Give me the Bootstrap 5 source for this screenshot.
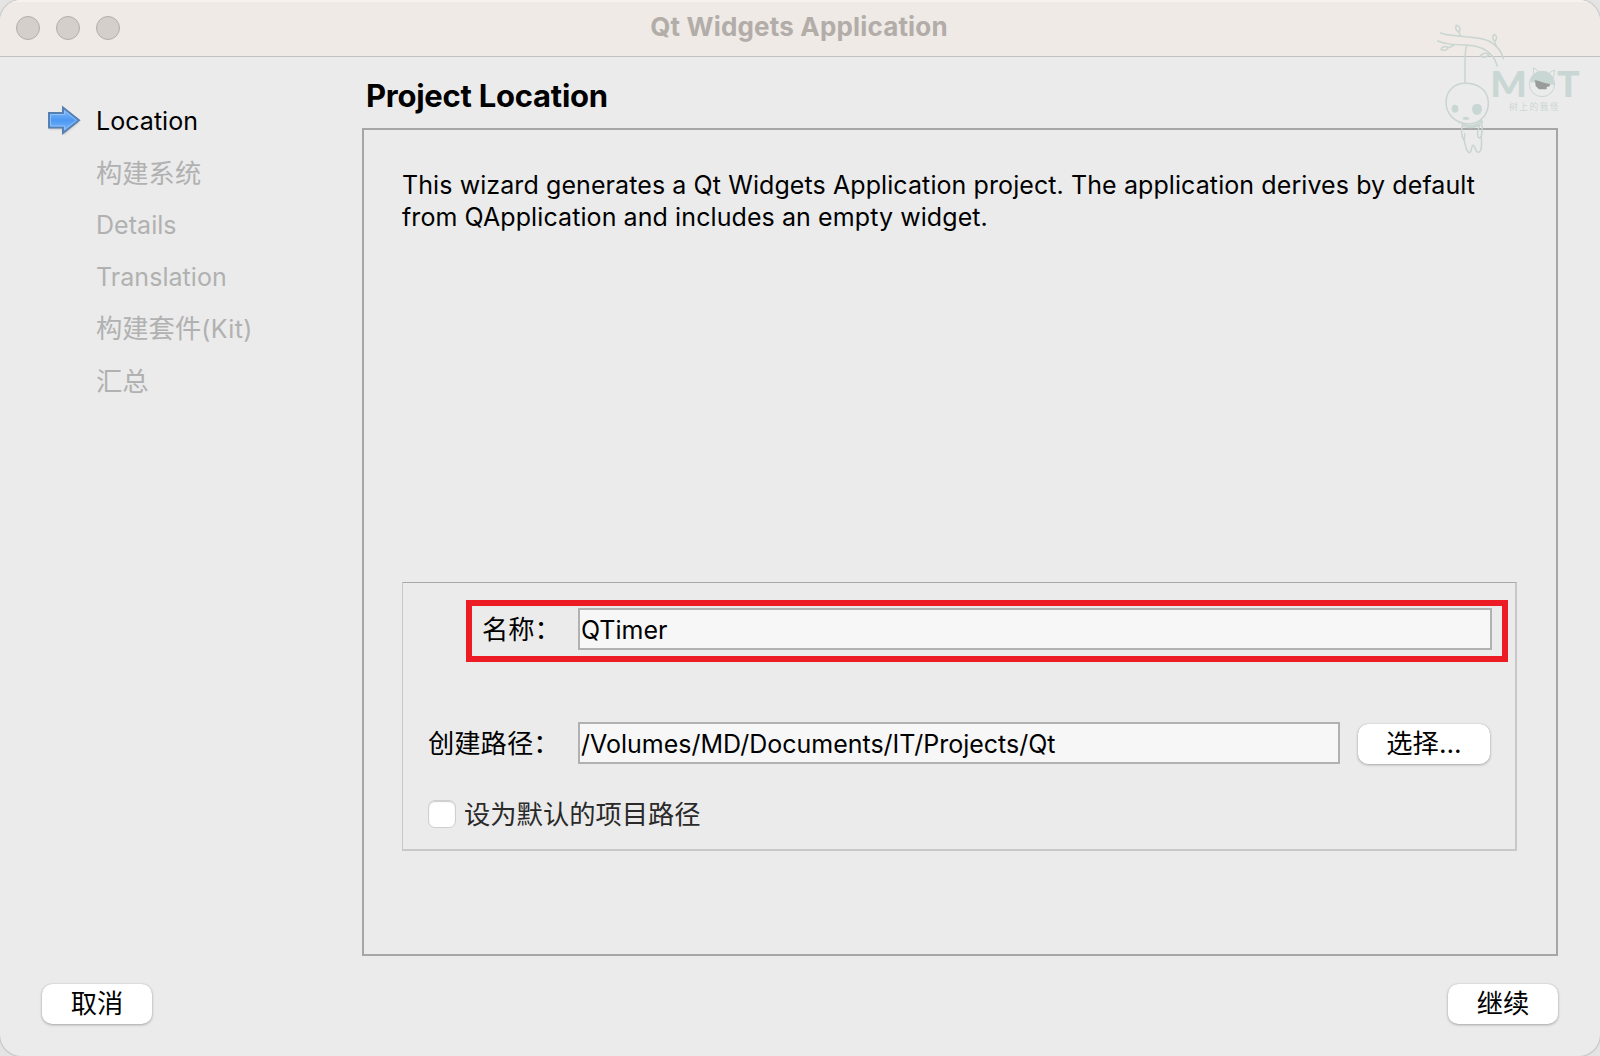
<!DOCTYPE html>
<html lang="zh-CN">
<head>
<meta charset="utf-8">
<meta name="viewport" content="width=device-width, initial-scale=1">
<title>Qt Widgets Application</title>
<link href="https://cdn.jsdelivr.net/npm/bootstrap@5.3.0/dist/css/bootstrap.min.css" rel="stylesheet">
<style>
  html, body { height: 100%; }
  body { background: #e4e4e5; overflow: hidden; color: #000; font: 25px/32px Inter, "Noto Sans CJK SC", sans-serif; }
  .wizard { width: 1600px; height: 1056px; border-radius: 21px; background: #ebebeb; overflow: hidden; box-shadow: 0 0 2px #888; }
  .titlebar { height: 57px; background: #efeae6; border-bottom: 1px solid #c3c1c0; box-shadow: inset 0 2px 0 #f6f2ef; }
  .lights { left: 16px; gap: 16px; }
  .light { width: 24px; height: 24px; border-radius: 50%; background: #d4cfcb; border: 1px solid #b3aeab; }
  .caption { color: #b2ada9; font-size: 26px; font-weight: 700; letter-spacing: .17px; padding: 0 2px 3px 0; }
  .sidebar { width: 362px; padding: 38px 0 0 48px; }
  .step { height: 52px; gap: 15px; color: #b1b1b1; letter-spacing: .05px; }
  .step.current { color: #000; }
  .step-icon { width: 33px; height: 32px; flex: none; }
  .cn { font-size: 26.3px; letter-spacing: 0; }
  .step .cn { padding-top: 1px; }
  .kit { letter-spacing: .4px; }
  .heading { font-size: 31px; font-weight: 700; line-height: 40px; letter-spacing: -.25px; margin: 19px 0 12px 4px; }
  .page-frame { width: 1196px; height: 828px; border: 2px solid #a6a6a6; padding: 39px 38px 0; }
  .intro { height: 413px; letter-spacing: .09px; margin: 0; }
  .group { width: 1115px; height: 269px; border: solid #c8c8c8; border-width: 1px 2px 2px 1px; border-top-color: #a8a8a8; padding: 17px 7px 0 25px; }
  .marked { width: 1042px; height: 62px; border: 6px solid #ed1c24; margin-left: 38px; padding: 2px 10px 0 10px; }
  .name-label { width: 96px; line-height: 44px; }
  .path-label { width: 150px; padding-top: 1px; }
  .field { height: 42px; border: 2px solid #b1b1b1; border-radius: 0; background: #f7f7f7; color: #000; padding: 2px 1px 0; font-size: 25px; line-height: 36px; letter-spacing: 0; }
  .field:focus { box-shadow: none; background: #f7f7f7; }
  .path-field { width: 762px; }
  .path-row { margin-top: 60px; padding-right: 18px; }
  .push { height: 40px; background: #fff; border: 0; border-radius: 10px; box-shadow: 0 1px 3px rgba(0,0,0,.28), 0 0 1px rgba(0,0,0,.25); padding: 0 0 1px; line-height: 36px; color: #000; }
  .choose { width: 132px; margin: 2px 0 0 18px; }
  .wide { width: 110px; }
  .check { width: 28px; height: 28px; margin: 0; border: 1px solid #cfcfcf; border-radius: 7px !important; background: #fff; box-shadow: inset 0 1px 1px #ccc; }
  .check-row { height: 32px; margin-top: 34px; gap: 8px; color: #2a2a2a; }
  .check-row .cn { padding-top: 2px; }
  .actions { padding: 28px 42px 0; }
  .watermark { left: 1430px; top: 20px; pointer-events: none; }
</style>
</head>
<body>
<main class="wizard position-relative d-flex flex-column">
  <header class="titlebar position-relative d-flex align-items-center justify-content-center flex-shrink-0">
    <div class="lights position-absolute d-flex"><span class="light"></span><span class="light"></span><span class="light"></span></div>
    <div class="caption">Qt Widgets Application</div>
  </header>
  <div class="d-flex">
    <nav class="sidebar flex-shrink-0">
      <div class="step current d-flex align-items-center">
        <svg class="step-icon" viewBox="0 0 33 32">
          <defs>
            <linearGradient id="arrow" x1="0" x2="0" y1="0" y2="1"><stop offset="0" stop-color="#8cc0f8"/><stop offset=".5" stop-color="#4c98f2"/><stop offset="1" stop-color="#83bcff"/></linearGradient>
            <filter id="soft" x="-20%" y="-20%" width="140%" height="140%"><feGaussianBlur stdDeviation="1.2"/></filter>
          </defs>
          <path d="M1 10H15V4L31 17 15 30V24H1Z" fill="#999" opacity=".6" filter="url(#soft)"/>
          <path d="M1 8H15V2.500L31 15.300 15 28V22.500H1Z" fill="url(#arrow)" stroke="#5580b3" stroke-width="2"/>
          <path d="M2.600 9.500H16.600V6L28.500 15.300 16.600 24.500V21H2.600Z" fill="none" stroke="#9ac8fb" stroke-width="1" opacity=".8"/>
        </svg>
        <span>Location</span>
      </div>
      <div class="step d-flex align-items-center"><span class="step-icon"></span><span class="cn">构建系统</span></div>
      <div class="step d-flex align-items-center"><span class="step-icon"></span><span>Details</span></div>
      <div class="step d-flex align-items-center"><span class="step-icon"></span><span>Translation</span></div>
      <div class="step d-flex align-items-center"><span class="step-icon"></span><span><span class="cn">构建套件</span><span class="kit">(Kit)</span></span></div>
      <div class="step d-flex align-items-center"><span class="step-icon"></span><span class="cn">汇总</span></div>
    </nav>
    <section>
      <h1 class="heading">Project Location</h1>
      <div class="page-frame">
        <p class="intro">This wizard generates a Qt Widgets Application project. The application derives by default<br>from QApplication and includes an empty widget.</p>
        <div class="group">
          <div class="marked d-flex">
            <label class="cn flex-shrink-0 name-label" for="name">名称：</label>
            <input id="name" class="field form-control" value="QTimer">
          </div>
          <div class="path-row d-flex align-items-center">
            <label class="cn flex-shrink-0 path-label" for="path">创建路径：</label>
            <input id="path" class="field path-field form-control" value="/Volumes/MD/Documents/IT/Projects/Qt">
            <button class="push choose btn cn flex-shrink-0">选择...</button>
          </div>
          <div class="check-row d-flex align-items-center">
            <input class="check form-check-input" type="checkbox" id="def"><label class="cn" for="def">设为默认的项目路径</label>
          </div>
        </div>
      </div>
    </section>
  </div>
  <footer class="actions d-flex justify-content-between">
    <button class="push wide btn cn">取消</button>
    <button class="push wide btn cn">继续</button>
  </footer>
  <svg class="watermark position-absolute" width="160" height="140" viewBox="30 30 480 420">
    <!-- branch, hanging doll and wordmark -->
    <g fill="none" stroke="#c9d5d0" stroke-width="4.500" stroke-linecap="round">
      <path d="M62 69C88 78 110 76 135 80C165 83 190 82 212 96C232 108 245 126 250 146"/>
      <path d="M53 93C80 103 100 104 140 105C180 107 203 121 217 138C226 149 229 158 232 168"/>
      <path d="M121 77C119 70 118 68 115 65C106 62 106 50 109 46C117 46 124 57 117 66"/>
      <path d="M228 107L224 93C216 88 217 78 223 73C231 77 232 88 225 93"/>
      <path d="M102 106C93 109 90 111 84 114C80 121 70 123 63 119C65 110 75 107 84 113"/>
      <path d="M207 134C200 129 190 129 182 136C187 144 199 143 207 134"/>
      <path d="M140 107C134 125 136 145 135 165V219"/>
      <path d="M135 220C103 220 79 243 78 276C78 310 102 339 144 342C184 342 206 310 205 277C204 242 177 220 135 220Z"/>
      <path d="M125 340C140 351 166 350 184 334M184 330C190 336 186 345 176 347M130 349C150 356 170 350 178 345"/>
      <path d="M127 346C121 370 128 388 133 389L134 371M131 388C137 401 137 428 149 428C156 426 153 407 160 406C167 407 164 428 176 427C187 424 185 402 184 380L187 347M178 349C172 365 171 380 177 384C184 385 187 370 186 358"/>
    </g>
    <g fill="#c9d7d4">
      <ellipse cx="105" cy="296" rx="10" ry="12"/><ellipse cx="171" cy="298" rx="15" ry="17"/><ellipse cx="138" cy="325" rx="10" ry="5"/>
      <path d="M330 216C334 192 352 182 368 183C387 183 401 197 403 224C375 224 354 218 330 216Z"/>
      <text x="211" y="261" font-family="Lato, sans-serif" font-weight="900" font-size="108" textLength="110" lengthAdjust="spacingAndGlyphs">M</text>
      <text x="411" y="261" font-family="Lato, sans-serif" font-weight="900" font-size="108" textLength="68" lengthAdjust="spacingAndGlyphs">T</text>
    </g>
    <path d="M341 194L340 173 358 185M388 188L404 180 400 205" fill="none" stroke="#c9d7d4" stroke-width="3"/>
    <circle cx="366" cy="222" r="38" fill="none" stroke="#c9d7d4" stroke-width="3"/>
    <path d="M345 210C360 214 374 220 390 222L389 229 380 231V238H357L347 228Z" fill="#999c9b"/>
    <text x="267" y="300" textLength="149" font-family="Noto Sans CJK SC, sans-serif" font-size="26" fill="#cbd6d2">树上的我怪</text>
  </svg>
</main>
<script src="https://cdn.jsdelivr.net/npm/bootstrap@5.3.0/dist/js/bootstrap.bundle.min.js"></script>
</body>
</html>
